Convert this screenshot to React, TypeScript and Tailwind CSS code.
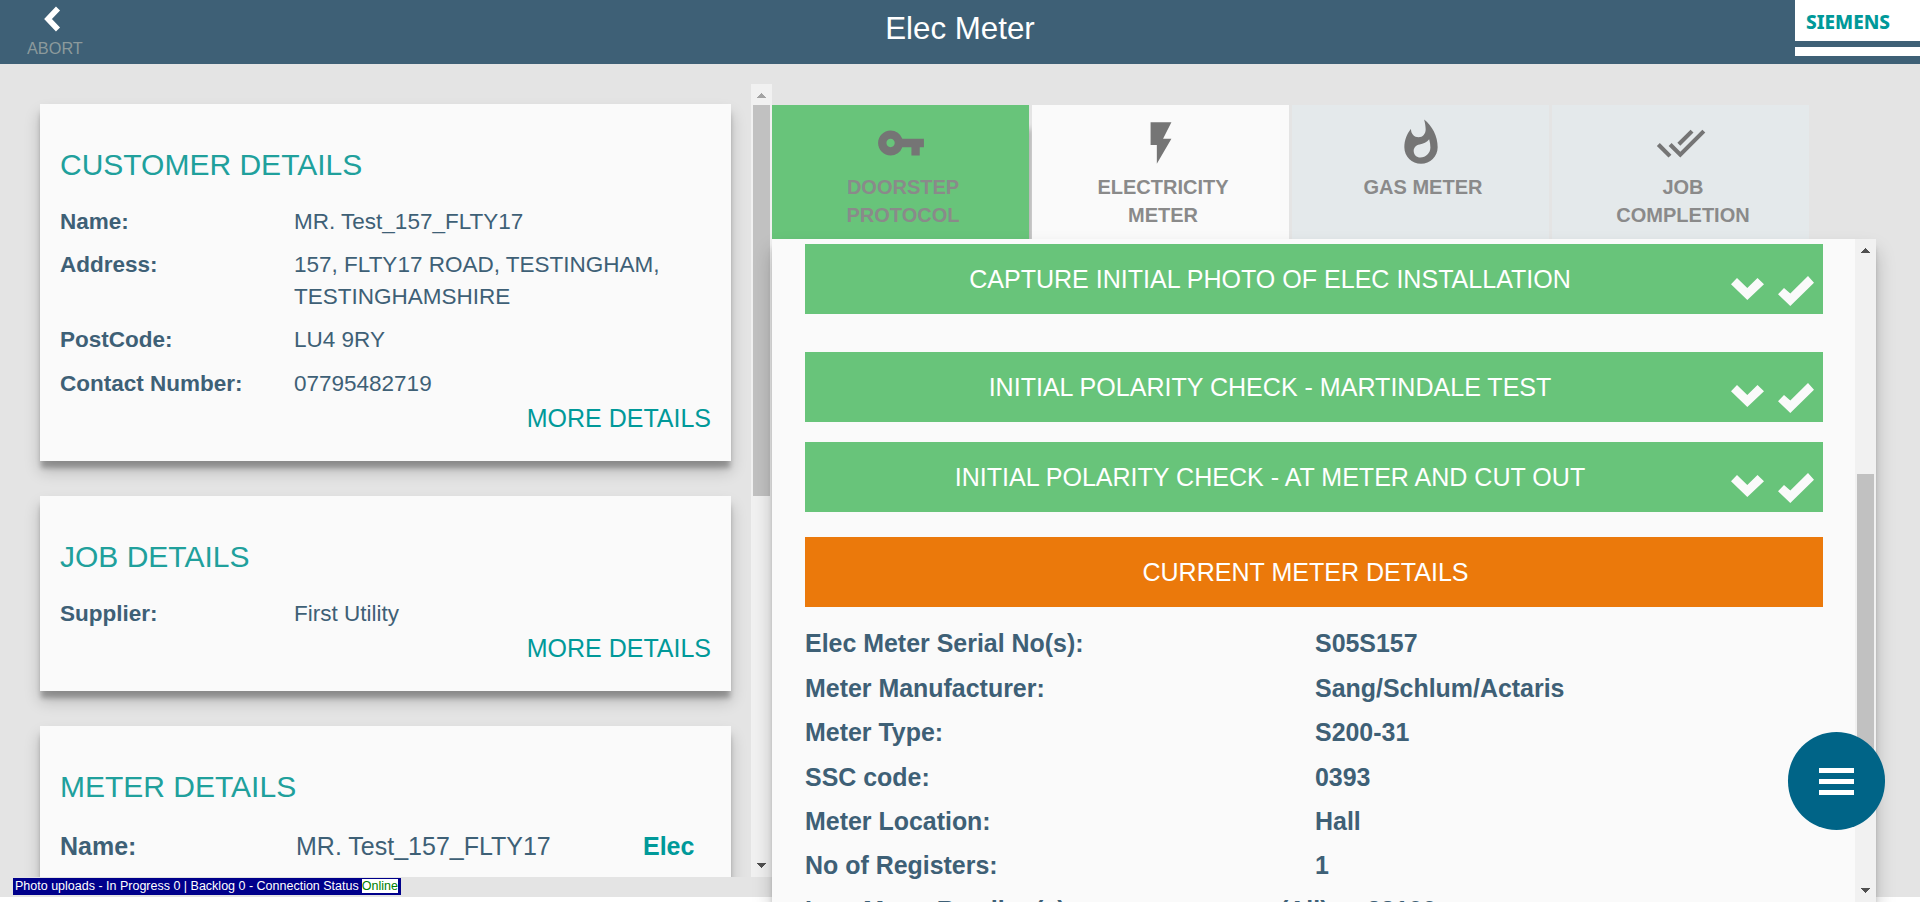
import React from "react";
import { MdVpnKey, MdFlashOn, MdWhatshot, MdDoneAll } from "react-icons/md";

function ScrollArrow({ up, color }: { up?: boolean; color: string }) {
  return (
    <svg width="9" height="5" viewBox="0 0 9 5" fill={color} shapeRendering="crispEdges">
      {up ? <path d="M4 0h1v1h1v1h1v1h1v1h1v1H0V4h1V3h1V2h1V1h1z" /> : <path d="M0 0h9v1H8v1H7v1H6v1H5v1H4V4H3V3H2V2H1V1H0z" />}
    </svg>
  );
}

function Card({ title, className, children }: { title: string; className: string; children: React.ReactNode }) {
  return (
    <section className={"w-[691px] shrink-0 bg-[#fafafa] px-5 pt-[42px] shadow-[0_8px_5px_-1px_rgba(0,0,0,0.26),0_10px_15px_0px_rgba(0,0,0,0.2)] " + className}>
      <h2 className="text-[30px] leading-[38px] text-[#20a09c]">{title}</h2>
      {children}
    </section>
  );
}

function Field({ label, value, className }: { label: string; value: React.ReactNode; className: string }) {
  return (
    <div className={"flex text-[22.5px] leading-8 text-[#3e6076] " + className}>
      <span className="w-[234px] shrink-0 font-bold">{label}</span>
      <span className="whitespace-nowrap">{value}</span>
    </div>
  );
}

function More({ className }: { className: string }) {
  return <div className={"text-right text-[25px] leading-[30px] text-[#009999] " + className}>MORE DETAILS</div>;
}

function Tab({ icon, label, className }: { icon: React.ReactNode; label: React.ReactNode; className: string }) {
  return (
    <div className={"flex h-[134px] w-[257px] shrink-0 flex-col items-center pt-[14px] text-[#757575] " + className}>
      <div className="flex h-12 items-center">{icon}</div>
      <div className="mt-[6px] pl-[5px] text-center text-[20px] font-bold leading-7 text-[#8a8a8a]">{label}</div>
    </div>
  );
}

function Bar({ label, className, iconClass }: { label: string; className: string; iconClass?: string }) {
  return (
    <div className={"flex h-[70px] w-[1018px] items-center text-[25.05px] text-white " + className}>
      <span className={iconClass ? "grow pl-1 pt-[2px] text-center" : "w-[1001px] pt-[2px] text-center"}>{label}</span>
      {iconClass && (
        <div className={"mr-[9px] flex shrink-0 items-end gap-[14px] text-[#fafafa] " + iconClass}>
          <svg className="mb-[6px]" width="33" height="22" viewBox="0 0 33 22" fill="currentColor">
            <path d="M6 0L16.3 10L26.5 0L33 6.2L16.3 22L0 6.2z" />
          </svg>
          <svg width="36" height="30" viewBox="0 0 36 30" fill="currentColor">
            <path d="M0 18.2L6 12L12.3 17.5L30 0L36 6.8L12.3 30z" />
          </svg>
        </div>
      )}
    </div>
  );
}

const readings: [string, string][] = [
  ["Elec Meter Serial No(s):", "S05S157"],
  ["Meter Manufacturer:", "Sang/Schlum/Actaris"],
  ["Meter Type:", "S200-31"],
  ["SSC code:", "0393"],
  ["Meter Location:", "Hall"],
  ["No of Registers:", "1"],
];

export default function App() {
  return (
    <div className="relative flex h-[902px] w-[1920px] flex-col overflow-hidden bg-white font-['Liberation_Sans',sans-serif]">
      <header className="flex h-16 shrink-0 items-start justify-between bg-[#3e6076]">
        <div className="flex w-[125px] flex-col pl-[27px] pt-[6px]">
          <svg className="ml-[17px]" width="17" height="26" viewBox="0 0 17 26" fill="none" stroke="#fff" strokeWidth="5.6">
            <path d="M14 2.5L4 13L14 23.5" />
          </svg>
          <span className="mt-[5px] text-[16.3px] leading-[22px] text-[#8c9a9c]">ABORT</span>
        </div>
        <h1 className="pt-[11px] text-[31.3px] leading-9 text-white">Elec Meter</h1>
        <div className="h-14 w-[125px] bg-white">
          <div className="flex h-[41px] items-center pl-[11px] pt-[3px]">
            <svg width="100" height="30" viewBox="0 0 100 30">
              <text x="0" y="22" textLength="84" lengthAdjust="spacingAndGlyphs" fontFamily="Noto Sans, sans-serif" fontWeight="800" fontSize="19" fill="#009999">SIEMENS</text>
            </svg>
          </div>
          <div className="h-[6px] bg-[#3e6076]" />
        </div>
      </header>

      <main className="flex h-[833px] shrink-0 bg-[#e4e4e4]">
        <div className="mt-5 flex h-[793px] w-[772px] shrink-0 overflow-hidden">
          <div className="flex w-[751px] flex-col gap-[35px] overflow-hidden pl-10 pt-5">
            <Card title="CUSTOMER DETAILS" className="h-[357px]">
              <Field label="Name:" value="MR. Test_157_FLTY17" className="mt-[22px]" />
              <Field label="Address:" value={<>157, FLTY17 ROAD, TESTINGHAM,<br />TESTINGHAMSHIRE</>} className="mt-[11px]" />
              <Field label="PostCode:" value="LU4 9RY" className="mt-[11px]" />
              <Field label="Contact Number:" value="07795482719" className="mt-3" />
              <More className="mt-[3px]" />
            </Card>
            <Card title="JOB DETAILS" className="h-[195px]">
              <Field label="Supplier:" value="First Utility" className="mt-[22px]" />
              <More className="mt-[3px]" />
            </Card>
            <Card title="METER DETAILS" className="h-[260px]">
              <div className="mt-6 flex text-[25px] leading-8 text-[#3e6076]">
                <span className="w-[236px] font-bold">Name:</span>
                <span className="w-[347px]">MR. Test_157_FLTY17</span>
                <span className="font-bold text-[#009999]">Elec</span>
              </div>
            </Card>
          </div>
          <div className="flex w-[21px] flex-col items-center bg-[#f1f1f1]">
            <div className="flex h-[21px] items-center pt-[2px]"><ScrollArrow up color="#a3a3a3" /></div>
            <div className="h-[391px] w-[17px] bg-[#c1c1c1]" />
            <div className="flex grow items-end pb-[9px]"><ScrollArrow color="#505050" /></div>
          </div>
        </div>

        <div className="flex w-[1104px] shrink-0 flex-col pt-[41px]">
          <div className="flex gap-[3px]">
            <Tab icon={<MdVpnKey size={50} />} label={<>DOORSTEP<br />PROTOCOL</>} className="bg-[#68c47a] shadow-[7px_20px_6px_-4px_rgba(0,0,0,0.22)]" />
            <Tab icon={<MdFlashOn size={50} />} label={<>ELECTRICITY<br />METER</>} className="bg-[#fafafa]" />
            <Tab icon={<MdWhatshot size={50} />} label="GAS METER" className="bg-[#e4e9eb]" />
            <Tab icon={<MdDoneAll size={50} />} label={<>JOB<br />COMPLETION</>} className="bg-[#e4e9eb]" />
          </div>
          <div className="flex h-[663px] shrink-0 bg-[#fafafa] shadow-[0_8px_5px_-1px_rgba(0,0,0,0.2),0_12px_18px_0px_rgba(0,0,0,0.22)]">
            <div className="w-[1083px] overflow-hidden pl-[33px] pt-[5px]">
              <Bar label="CAPTURE INITIAL PHOTO OF ELEC INSTALLATION" className="bg-[#68c47a]" iconClass="mt-6" />
              <Bar label="INITIAL POLARITY CHECK - MARTINDALE TEST" className="mt-[38px] bg-[#68c47a]" iconClass="mt-[22px]" />
              <Bar label="INITIAL POLARITY CHECK - AT METER AND CUT OUT" className="mt-5 bg-[#68c47a]" iconClass="mt-[22px]" />
              <Bar label="CURRENT METER DETAILS" className="mt-[25px] bg-[#eb790b]" />
              <div className="mt-[15px] text-[24.95px] font-bold text-[#3e6076]">
                {readings.map(([k, v]) => (
                  <div key={k} className="flex h-[44.4px] items-center">
                    <span className="w-[510px]">{k}</span>
                    <span>{v}</span>
                  </div>
                ))}
                <div className="flex h-[44.4px] items-center">
                  <span className="w-[475px]">Last Meter Reading(s):</span>
                  <span className="w-[87px]">(All) =</span>
                  <span>28100</span>
                </div>
              </div>
            </div>
            <div className="flex w-[21px] flex-col items-center bg-[#f1f1f1]">
              <div className="flex h-[235px] items-start pt-[9px]"><ScrollArrow up color="#505050" /></div>
              <div className="h-[320px] w-[17px] bg-[#c1c1c1]" />
              <div className="flex grow items-end pb-[9px]"><ScrollArrow color="#505050" /></div>
            </div>
          </div>
        </div>
      </main>

      <div className="absolute left-[13px] top-[878px] flex h-[17px] w-[388px] items-center justify-between whitespace-nowrap bg-[#00008b] pb-[2px] pl-[2px] pr-[3px] text-[12.5px] leading-[14px] text-white">
        <span>Photo uploads - In Progress 0 | Backlog 0 - Connection Status</span>
        <span className="bg-white text-[#008000]">Online</span>
      </div>

      <button className="absolute left-[1788px] top-[732px] flex h-[98px] w-[97px] flex-col items-center justify-center gap-[6px] rounded-full bg-[#006487]" aria-label="Menu">
        <span className="h-[5px] w-[35px] bg-white" />
        <span className="h-[5px] w-[35px] bg-white" />
        <span className="h-[5px] w-[35px] bg-white" />
      </button>
    </div>
  );
}
